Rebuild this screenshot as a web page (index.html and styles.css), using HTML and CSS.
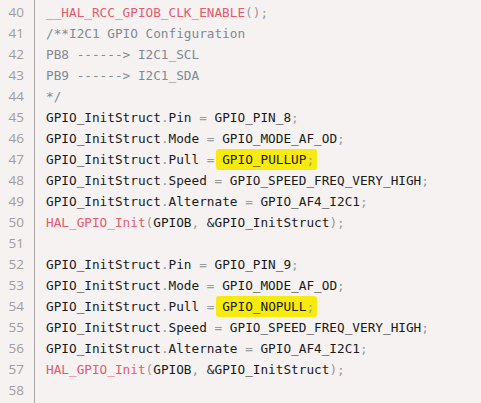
FILE: index.html
```html
<!DOCTYPE html>
<html>
<head>
<meta charset="utf-8">
<link rel="stylesheet" href="styles.css">
</head>
<body>
<div class="editor">
  <div class="gutter">
    <div>40</div><div>41</div><div>42</div><div>43</div><div>44</div><div>45</div>
    <div>46</div><div>47</div><div>48</div><div>49</div><div>50</div><div>51</div>
    <div>52</div><div>53</div><div>54</div><div>55</div><div>56</div><div>57</div><div>58</div>
  </div>
  <div class="code">
    <div class="ln"><span class="fn">__HAL_RCC_GPIOB_CLK_ENABLE</span><span class="p">();</span></div>
    <div class="ln cm">/**I2C1 GPIO Configuration</div>
    <div class="ln cm">PB8 ------&gt; I2C1_SCL</div>
    <div class="ln cm">PB9 ------&gt; I2C1_SDA</div>
    <div class="ln cm">*/</div>
    <div class="ln">GPIO_InitStruct<span class="p">.</span>Pin <span class="p">=</span> GPIO_PIN_8<span class="p">;</span></div>
    <div class="ln">GPIO_InitStruct<span class="p">.</span>Mode <span class="p">=</span> GPIO_MODE_AF_OD<span class="p">;</span></div>
    <div class="ln">GPIO_InitStruct<span class="p">.</span>Pull <span class="p">=</span> <span class="hl">GPIO_PULLUP<span class="p">;</span></span></div>
    <div class="ln">GPIO_InitStruct<span class="p">.</span>Speed <span class="p">=</span> GPIO_SPEED_FREQ_VERY_HIGH<span class="p">;</span></div>
    <div class="ln">GPIO_InitStruct<span class="p">.</span>Alternate <span class="p">=</span> GPIO_AF4_I2C1<span class="p">;</span></div>
    <div class="ln"><span class="fn">HAL_GPIO_Init</span><span class="p">(</span>GPIOB<span class="p">,</span> &amp;GPIO_InitStruct<span class="p">);</span></div>
    <div class="ln">&nbsp;</div>
    <div class="ln">GPIO_InitStruct<span class="p">.</span>Pin <span class="p">=</span> GPIO_PIN_9<span class="p">;</span></div>
    <div class="ln">GPIO_InitStruct<span class="p">.</span>Mode <span class="p">=</span> GPIO_MODE_AF_OD<span class="p">;</span></div>
    <div class="ln">GPIO_InitStruct<span class="p">.</span>Pull <span class="p">=</span> <span class="hl">GPIO_NOPULL<span class="p">;</span></span></div>
    <div class="ln">GPIO_InitStruct<span class="p">.</span>Speed <span class="p">=</span> GPIO_SPEED_FREQ_VERY_HIGH<span class="p">;</span></div>
    <div class="ln">GPIO_InitStruct<span class="p">.</span>Alternate <span class="p">=</span> GPIO_AF4_I2C1<span class="p">;</span></div>
    <div class="ln"><span class="fn">HAL_GPIO_Init</span><span class="p">(</span>GPIOB<span class="p">,</span> &amp;GPIO_InitStruct<span class="p">);</span></div>
    <div class="ln">&nbsp;</div>
  </div>
</div>
</body>
</html>
```

FILE: styles.css
```css
html, body {
  margin: 0;
  padding: 0;
  background: #f6f2f2;
}
.editor {
  display: flex;
  width: 481px;
  height: 403px;
  overflow: hidden;
  background: #f6f2f2;
}
.gutter {
  width: 35px;
  flex: none;
  box-sizing: border-box;
  border-right: 1px solid #a8a4a4;
  padding: 2px 10px 0 0;
  text-align: right;
  font-family: "Open Sans", "Noto Sans", sans-serif;
  font-size: 13.5px;
  line-height: 21px;
  color: #a09c9c;
}
.code {
  padding: 2px 0 0 11px;
  font-family: "DejaVu Sans Mono", monospace;
  font-size: 12.72px;
  line-height: 21px;
  color: #1a1a1a;
}
.ln {
  height: 21px;
  white-space: pre;
}
.fn {
  color: #e25a6e;
}
.p {
  color: #9a9a9a;
}
.cm {
  color: #7f8a94;
}
.hl {
  background: #f7ea10;
  border-radius: 3px;
  padding: 3px 3px 3px 6px;
  margin: 0 -3px 0 -6px;
}
```
